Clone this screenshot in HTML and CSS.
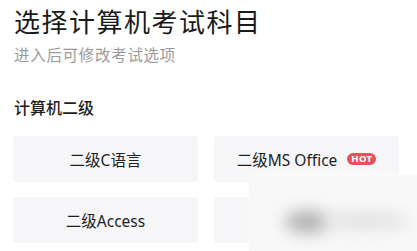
FILE: index.html
```html
<!DOCTYPE html>
<html lang="zh">
<head>
<meta charset="utf-8">
<link rel="stylesheet" href="styles.css">
</head>
<body>
<div class="page">
  <h1 class="title">选择计算机考试科目</h1>
  <p class="subtitle">进入后可修改考试选项</p>
  <h2 class="section">计算机二级</h2>
  <div class="grid">
    <div class="card">二级C语言</div>
    <div class="card">二级MS Office<span class="hot">HOT</span></div>
    <div class="card">二级Access</div>
    <div class="card"></div>
  </div>
  <div class="overlay">
    <span class="blob blob-a"></span>
    <span class="blob blob-b"></span>
  </div>
</div>
</body>
</html>
```
FILE: styles.css
```css
* { box-sizing: border-box; }
html, body { margin: 0; padding: 0; background: #fff; }
body {
  width: 417px;
  height: 251px;
  overflow: hidden;
  font-family: "Noto Sans CJK SC", "Noto Sans", sans-serif;
}
.page {
  position: relative;
  padding: 4px 18px 0 13px;
  height: 251px;
}
.title {
  margin: 0 0 0 1px;
  font-size: 26px;
  line-height: 34px;
  font-weight: 400;
  color: #1a1a1a;
  letter-spacing: 1.5px;
}
.subtitle {
  margin: 5px 0 0 1px;
  font-size: 15.5px;
  line-height: 22px;
  color: #9a9a9a;
  letter-spacing: 0.7px;
}
.section {
  margin: 31px 0 0 1px;
  font-size: 16px;
  line-height: 22px;
  font-weight: 500;
  color: #1e1e1e;
}
.grid {
  margin-top: 18px;
  display: grid;
  grid-template-columns: 185px 185px;
  column-gap: 16px;
  row-gap: 15px;
}
.card {
  height: 46px;
  background: #f6f6f8;
  border-radius: 3px;
  display: flex;
  align-items: center;
  justify-content: center;
  font-family: "Noto Sans", "Noto Sans CJK SC", sans-serif;
  font-size: 15.5px;
  color: #1e1e1e;
}
.hot {
  margin-left: 10px;
  background: #e8505d;
  color: #fff;
  font-family: "Noto Sans", sans-serif;
  font-weight: 700;
  font-size: 9.5px;
  line-height: 12px;
  padding: 0 4px;
  border-radius: 6px;
  letter-spacing: 0.3px;
}
.overlay {
  position: absolute;
  left: 249px;
  top: 175px;
  width: 168px;
  height: 76px;
  background: #f8f8f9;
  overflow: hidden;
  box-shadow: 0 -2px 6px rgba(255,255,255,0.6);
}
.blob {
  position: absolute;
  border-radius: 50%;
  filter: blur(8px);
}
.blob-a {
  left: 36px;
  top: 36px;
  width: 44px;
  height: 22px;
  background: #b0b0b2;
}
.blob-b {
  left: 75px;
  top: 38px;
  width: 85px;
  height: 16px;
  background: #e0e0e2;
}
```
